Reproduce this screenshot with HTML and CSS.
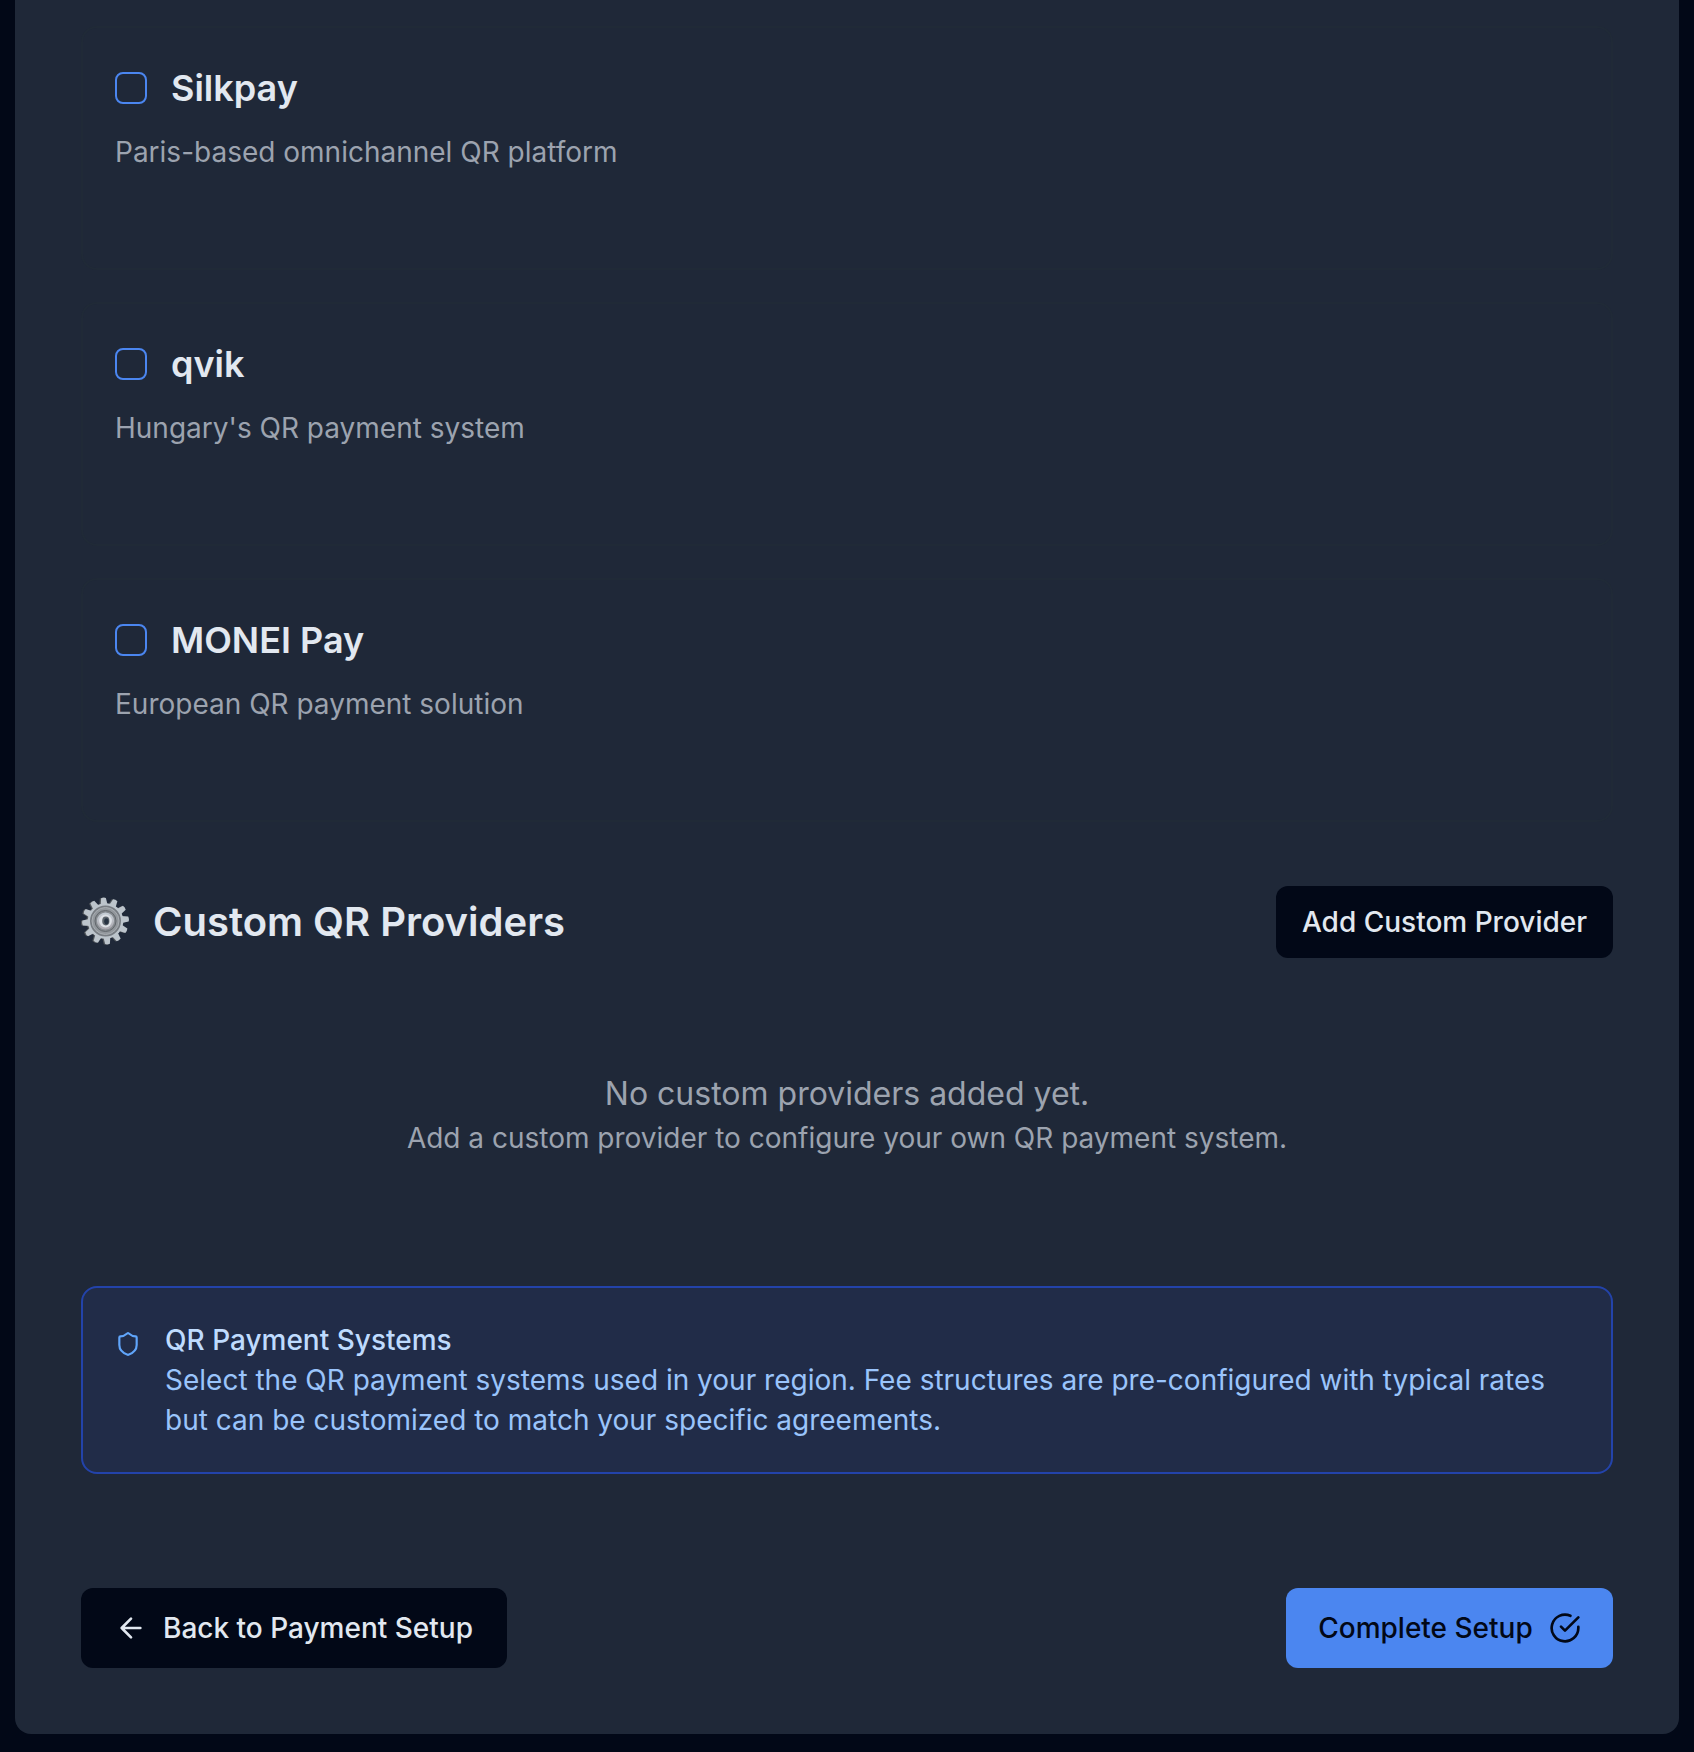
FILE: index.html
```html
<!DOCTYPE html>
<html lang="en">
<head>
<meta charset="utf-8">
<title>QR Payment Setup</title>
<link rel="stylesheet" href="styles.css">
</head>
<body>
<main class="panel">
  <section class="providers">
    <article class="provider">
      <label class="provider-head"><span class="checkbox"></span><span class="provider-name">Silkpay</span></label>
      <p class="provider-text">Paris-based omnichannel QR platform</p>
    </article>
    <article class="provider">
      <label class="provider-head"><span class="checkbox"></span><span class="provider-name">qvik</span></label>
      <p class="provider-text">Hungary's QR payment system</p>
    </article>
    <article class="provider">
      <label class="provider-head"><span class="checkbox"></span><span class="provider-name">MONEI Pay</span></label>
      <p class="provider-text">European QR payment solution</p>
    </article>
  </section>

  <section class="custom">
    <header class="custom-head">
      <svg class="gear" viewBox="-24 -24 48 48" aria-hidden="true">
        <defs>
          <linearGradient id="metal" x1="0" y1="0" x2="0" y2="1">
            <stop offset="0" stop-color="#c5ced6"/><stop offset="1" stop-color="#aaa7ae"/>
          </linearGradient>
          <g id="teeth">
            <path id="tooth" d="M-3.6-15L-2.4-23Q0-24 2.4-23L3.6-15Z"/>
            <use href="#tooth" transform="rotate(30)"/><use href="#tooth" transform="rotate(60)"/>
            <use href="#tooth" transform="rotate(90)"/><use href="#tooth" transform="rotate(120)"/>
            <use href="#tooth" transform="rotate(150)"/><use href="#tooth" transform="rotate(180)"/>
            <use href="#tooth" transform="rotate(210)"/><use href="#tooth" transform="rotate(240)"/>
            <use href="#tooth" transform="rotate(270)"/><use href="#tooth" transform="rotate(300)"/>
            <use href="#tooth" transform="rotate(330)"/><circle r="17.8"/>
          </g>
        </defs>
        <use href="#teeth" transform="translate(-.8 .2) rotate(-5)" fill="#50555a"/>
        <use href="#teeth" transform="translate(.5 0) rotate(-5)" fill="#bcc4cb"/>
        <circle cx=".5" r="15.5" fill="#777c82"/>
        <circle cx=".5" r="13.5" fill="#92979c" stroke="#a9aeb3" stroke-width="1"/>
        <circle cx=".5" r="10.5" fill="#858a8f" stroke="#63686d" stroke-width="1"/>
        <circle cx=".5" r="8.6" fill="url(#metal)"/>
        <circle cx=".5" r="6.4" fill="#dce0e5"/>
        <ellipse cx=".8" rx="3.6" ry="4.4" fill="#5d656d"/>
        <ellipse cx="1.4" cy=".3" rx="2.2" ry="3.1" fill="#273342"/>
      </svg>
      <h2 class="custom-title">Custom QR Providers</h2>
      <button class="btn btn-dark btn-add">Add Custom Provider</button>
    </header>
    <div class="empty">
      <p class="empty-title">No custom providers added yet.</p>
      <p class="empty-text">Add a custom provider to configure your own QR payment system.</p>
    </div>
  </section>

  <aside class="notice">
    <svg class="icon icon-shield" viewBox="0 0 24 24" aria-hidden="true"><path d="M20 13c0 5-3.5 7.5-7.66 8.95a1 1 0 0 1-.67-.01C7.5 20.5 4 18 4 13V6a1 1 0 0 1 1-1c2 0 4.5-1.2 6.24-2.72a1.17 1.17 0 0 1 1.52 0C14.51 3.81 17 5 19 5a1 1 0 0 1 1 1z"/></svg>
    <div class="notice-body">
      <p class="notice-title">QR Payment Systems</p>
      <p class="notice-text">Select the QR payment systems used in your region. Fee structures are pre-configured with typical rates but can be customized to match your specific agreements.</p>
    </div>
  </aside>

  <footer class="actions">
    <button class="btn btn-dark btn-nav">
      <svg class="icon" viewBox="0 0 24 24" aria-hidden="true"><path d="m12 19-7-7 7-7M19 12H5"/></svg>
      Back to Payment Setup
    </button>
    <button class="btn btn-primary btn-nav">
      Complete Setup
      <svg class="icon" viewBox="0 0 24 24" aria-hidden="true"><path d="M22 11.08V12a10 10 0 1 1-5.93-9.14"/><path d="m9 11 3 3L22 4"/></svg>
    </button>
  </footer>
</main>
</body>
</html>
```
FILE: styles.css
```css
* { box-sizing: border-box; margin: 0; }

body {
  min-height: 1752px;
  padding: 0 15px 18px;
  background: #020817;
  color: #e2e8f0;
  font-family: Inter, "Liberation Sans", sans-serif;
  font-size: 28px;
  line-height: 40px;
}

.panel {
  height: 1734px;
  padding: 26px 66px 66px;
  background: #1f2838;
  border-radius: 0 0 16px 16px;
}

.providers { display: flex; flex-direction: column; gap: 32px; }
.provider {
  height: 244px;
  padding: 42px 32px;
  border: 2px solid #202a37;
  border-radius: 16px;
}
.provider-head { display: flex; align-items: center; gap: 24px; height: 36px; }
.checkbox { width: 32px; height: 32px; border: 2px solid #4b86f0; border-radius: 8px; }
.provider-name { font-size: 36px; font-weight: 600; line-height: 36px; }
.provider-text { margin-top: 26px; color: #9ca3af; }

.custom-head { display: flex; align-items: center; height: 72px; margin-top: 64px; }
.gear { width: 48px; height: 48px; margin: 0 24px 2px 0; }
.custom-title { flex: 1; font-size: 40px; font-weight: 600; line-height: 56px; }

.empty { margin-top: 48px; padding: 64px 0; text-align: center; color: #9ca3af; }
.empty-title { font-size: 32px; line-height: 48px; }

.btn {
  display: flex;
  align-items: center;
  justify-content: center;
  gap: 16px;
  border: 0;
  border-radius: 12px;
  font: 500 28px/40px Inter, "Liberation Sans", sans-serif;
  white-space: nowrap;
}
.btn-dark { background: #020817; color: #e2e8f0; }
.btn-primary { background: #4b86f0; color: #020817; }
.btn-add { width: 337px; height: 72px; }
.btn-nav { height: 80px; padding: 0 32px; }
.btn-dark.btn-nav { width: 426px; }
.btn-primary.btn-nav { width: 327px; }

.icon {
  flex: none;
  width: 32px;
  height: 32px;
  fill: none;
  stroke: currentColor;
  stroke-width: 2;
  stroke-linecap: round;
  stroke-linejoin: round;
}

.notice {
  display: flex;
  gap: 24px;
  height: 188px;
  margin-top: 64px;
  padding: 32px;
  background: #212c48;
  border: 2px solid #2343aa;
  border-radius: 16px;
}
.icon-shield { width: 26px; margin-top: 8px; color: #60a5fa; }
.notice-title { font-weight: 500; color: #bfdbfe; }
.notice-text { color: #9ac4fb; }

.actions { display: flex; justify-content: space-between; margin-top: 114px; }
```
